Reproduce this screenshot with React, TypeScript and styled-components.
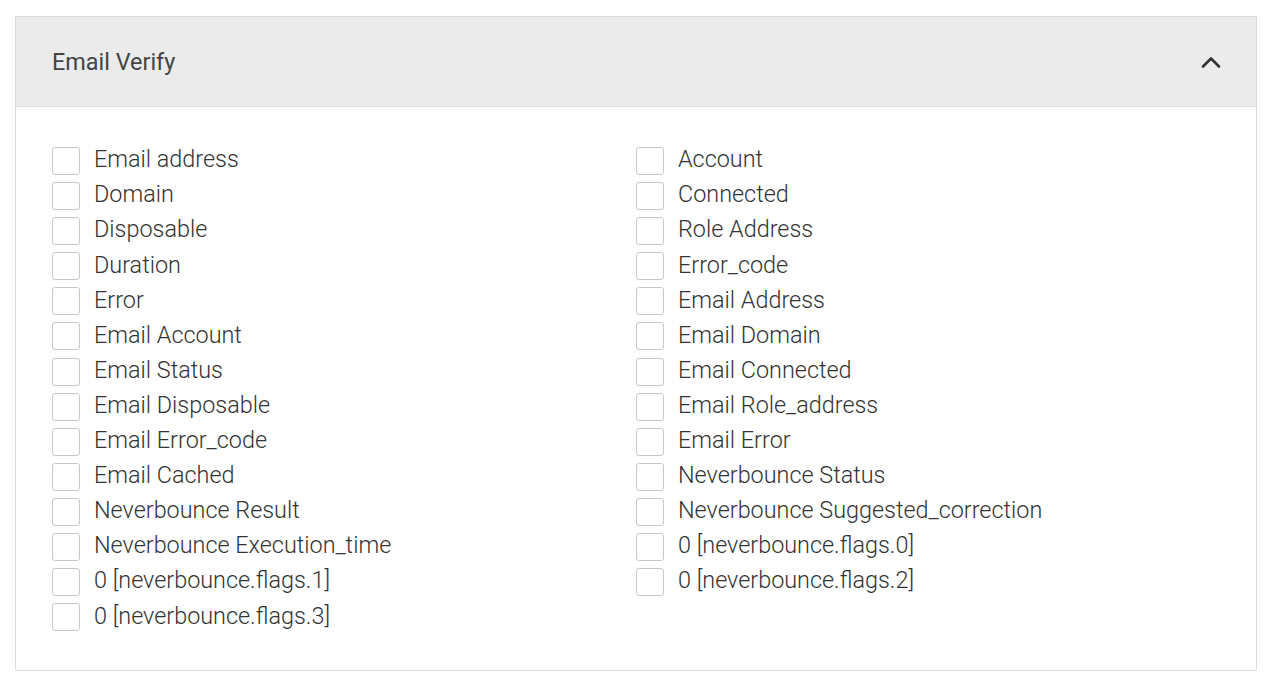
import { useState } from 'react';
import styled, { createGlobalStyle } from 'styled-components';

const leftFields = [
  'Email address',
  'Domain',
  'Disposable',
  'Duration',
  'Error',
  'Email Account',
  'Email Status',
  'Email Disposable',
  'Email Error_code',
  'Email Cached',
  'Neverbounce Result',
  'Neverbounce Execution_time',
  '0 [neverbounce.flags.1]',
  '0 [neverbounce.flags.3]',
];

const rightFields = [
  'Account',
  'Connected',
  'Role Address',
  'Error_code',
  'Email Address',
  'Email Domain',
  'Email Connected',
  'Email Role_address',
  'Email Error',
  'Neverbounce Status',
  'Neverbounce Suggested_correction',
  '0 [neverbounce.flags.0]',
  '0 [neverbounce.flags.2]',
];

function App() {
  const [open, setOpen] = useState(true);
  const [checked, setChecked] = useState<Record<string, boolean>>({});

  const toggle = (key: string) => {
    setChecked((prev) => ({ ...prev, [key]: !prev[key] }));
  };

  const renderColumn = (fields: string[], side: string) => (
    <Column>
      {fields.map((field) => {
        const key = side + field;
        return (
          <Row key={key}>
            <Box type="checkbox" checked={!!checked[key]} onChange={() => toggle(key)} />
            <Label>{field}</Label>
          </Row>
        );
      })}
    </Column>
  );

  return (
    <>
      <GlobalStyle />
      <Page>
        <Panel>
          <Header onClick={() => setOpen(!open)}>
            <Title>Email Verify</Title>
            <Chevron $open={open} width="22" height="14" viewBox="0 0 22 14">
              <path d="M3 11.5 L11 3.5 L19 11.5" fill="none" stroke="#333" strokeWidth="2.6" strokeLinecap="round" strokeLinejoin="round" />
            </Chevron>
          </Header>
          {open && (
            <Body>
              {renderColumn(leftFields, 'l')}
              {renderColumn(rightFields, 'r')}
            </Body>
          )}
        </Panel>
      </Page>
    </>
  );
}

export default App;

const GlobalStyle = createGlobalStyle`
  body {
    margin: 0;
    background: #fff;
    font-family: Roboto, "Liberation Sans", sans-serif;
  }
`;

const Page = styled.div`
  padding: 16px 11px 0 15px;
`;

const Panel = styled.div`
  border: 1px solid #dcdcdc;
  background: #fff;
`;

const Header = styled.div`
  display: flex;
  align-items: center;
  justify-content: space-between;
  height: 89px;
  padding: 0 34px 0 36px;
  background: #ebebeb;
  border-bottom: 1px solid #dcdcdc;
  cursor: pointer;
`;

const Title = styled.div`
  font-size: 23.4px;
  color: #444;
  padding-top: 1px;
`;

const Chevron = styled.svg<{ $open: boolean }>`
  transform: rotate(${(p) => (p.$open ? '0deg' : '180deg')});
`;

const Body = styled.div`
  display: grid;
  grid-template-columns: 584px 1fr;
  padding: 40px 36px 39px;
`;

const Column = styled.div`
  display: flex;
  flex-direction: column;
  gap: 7.1px;
`;

const Row = styled.label`
  display: flex;
  align-items: center;
  gap: 14px;
  height: 28px;
  cursor: pointer;
`;

const Box = styled.input`
  appearance: none;
  margin: 0;
  width: 28px;
  height: 28px;
  border: 1px solid #c8c8c8;
  border-radius: 3px;
  background: #fff;
  cursor: pointer;
  &:checked {
    background: #4a90d9;
    border-color: #4a90d9;
  }
`;

const Label = styled.span`
  font-size: 23.4px;
  font-weight: 300;
  color: #333;
  line-height: 1;
  padding-bottom: 2px;
`;
